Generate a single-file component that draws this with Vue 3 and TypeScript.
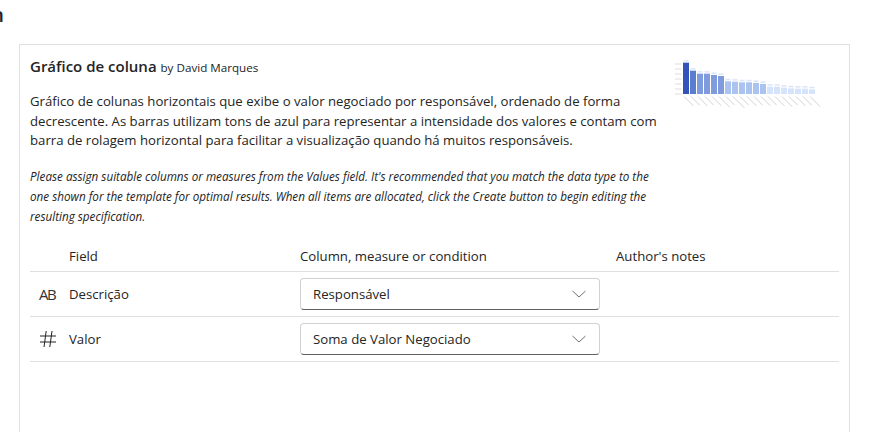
<script setup lang="ts">
const tops = [38, 62, 71, 71, 75, 78, 94, 95, 97, 97, 99, 102, 110, 110, 113, 115, 116, 116, 118]
const labelLengths = [13, 12, 13, 12, 13, 15, 12, 16, 12, 13, 12, 13, 12, 13, 14, 12, 13, 12, 14]
const colour = (i: number): string => {
  if (i === 0) return '#3353b8'
  if (i === 1) return '#5b7dcd'
  if (i < 6) return '#7f9bdd'
  if (i < 12) return '#abc3ef'
  return '#d6e4fb'
}
const bars = tops.map((t, i) => ({
  x: 13 + i * 7,
  y: t / 3 + 50 - 58,
  h: (132 - t) / 3,
  fill: colour(i),
  len: labelLengths[i],
}))
const ticks = [0, 1, 2, 3, 4, 5, 6].map((i) => 94 - 58 - i * 5)
const rows = [
  { kind: 'text', field: 'Descrição', value: 'Responsável' },
  { kind: 'number', field: 'Valor', value: 'Soma de Valor Negociado' },
]
</script>

<template>
  <div class="page">
    <div class="clip"><span>n</span></div>
    <section class="card">
      <header class="intro">
        <div class="copy">
          <h2 class="title">Gráfico de coluna <small>by David Marques</small></h2>
          <p class="desc">Gráfico de colunas horizontais que exibe o valor negociado por responsável, ordenado de forma decrescente. As barras utilizam tons de azul para representar a intensidade dos valores e contam com barra de rolagem horizontal para facilitar a visualização quando há muitos responsáveis.</p>
          <p class="note">Please assign suitable columns or measures from the Values field. It's recommended that you match the data type to the one shown for the template for optimal results. When all items are allocated, click the Create button to begin editing the resulting specification.</p>
        </div>
        <svg class="thumb" width="155" height="52" viewBox="0 0 155 52">
          <g class="blur">
            <line v-for="t in ticks" :key="t" x1="5" x2="11.5" :y1="t" :y2="t" stroke="#d4d4d4" stroke-width="0.8" />
            <g v-for="(b, i) in bars" :key="i">
              <rect :x="b.x" :y="b.y" width="6" :height="b.h" :fill="b.fill" />
              <rect :x="b.x + 0.5" :y="b.y - 2.6" width="5" height="1.6" fill="#dde6f8" />
              <line :x1="b.x + 1" y1="38.5" :x2="b.x + 1 + b.len * 0.72" :y2="38.5 + b.len * 0.72" stroke="#d2d2d2" stroke-width="1" />
            </g>
          </g>
        </svg>
      </header>

      <div class="table">
        <div class="row head">
          <div></div>
          <div>Field</div>
          <div>Column, measure or condition</div>
          <div>Author's notes</div>
        </div>
        <div v-for="row in rows" :key="row.field" class="row">
          <div class="icon">
            <span v-if="row.kind === 'text'" class="ab">AB</span>
            <svg v-else width="18" height="18" viewBox="0 0 18 18" fill="none" stroke="#222" stroke-width="1">
              <path d="M7.2 1 L5 17 M13 1 L10.8 17 M1 6 H17 M1 12 H17" />
            </svg>
          </div>
          <div>{{ row.field }}</div>
          <div>
            <div class="select">
              <span>{{ row.value }}</span>
              <svg width="14" height="8" viewBox="0 0 14 8" fill="none" stroke="#707070" stroke-width="1">
                <path d="M0.5 1 L7 7 L13.5 1" />
              </svg>
            </div>
          </div>
          <div></div>
        </div>
      </div>
    </section>
  </div>
</template>

<style scoped>
.page {
  width: 869px;
  height: 432px;
  overflow: hidden;
  background: #fff;
  font-family: "Open Sans", "Noto Sans", sans-serif;
  color: #242424;
  box-sizing: border-box;
}
.clip {
  height: 44px;
  width: 4px;
  overflow: hidden;
  display: flex;
  justify-content: flex-end;
  font-size: 20px;
  font-weight: 600;
  line-height: 29px;
  color: #242424;
}
.card {
  margin-left: 19px;
  width: 831px;
  height: 420px;
  box-sizing: border-box;
  border: 1px solid #e0e0e0;
  padding: 10px;
}
.intro {
  display: flex;
  justify-content: space-between;
  height: 190px;
}
.copy {
  width: 632px;
}
.title {
  margin: 0;
  font-size: 15px;
  font-weight: 600;
  line-height: 23px;
}
.title small {
  font-size: 11.65px;
  font-weight: 400;
}
.desc {
  margin: 13px 0 0;
  font-size: 13.18px;
  line-height: 19.5px;
}
.note {
  margin: 15px 0 0;
  width: 626px;
  font-size: 11.7px;
  font-style: italic;
  line-height: 20px;
}
.thumb {
  margin-top: 3px;
  margin-right: 14px;
  flex: none;
}
.blur {
  filter: blur(0.5px);
}
.table {
  font-size: 13.2px;
}
.row {
  display: grid;
  grid-template-columns: 39px 231px 316px 223px;
  align-items: center;
  height: 44px;
  border-bottom: 1px solid #e0e0e0;
}
.row.head {
  height: 22px;
  padding-bottom: 4px;
}
.icon {
  display: flex;
  align-items: center;
  padding-left: 9px;
}
.ab {
  font-size: 15px;
  letter-spacing: -1.4px;
  color: #333;
}
.select {
  width: 300px;
  height: 32px;
  box-sizing: border-box;
  display: flex;
  align-items: center;
  justify-content: space-between;
  padding: 0 13px 0 12px;
  border: 1px solid #d1d1d1;
  border-bottom-color: #616161;
  border-radius: 4px;
}
</style>
